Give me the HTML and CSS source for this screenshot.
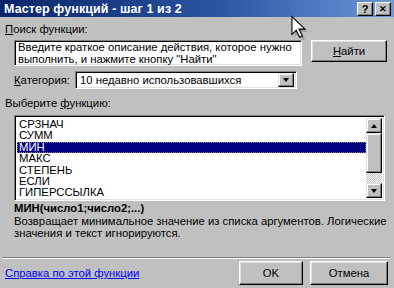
FILE: index.html
```html
<!DOCTYPE html>
<html lang="ru">
<head>
  <meta charset="UTF-8" />
  <title>Мастер функций - шаг 1 из 2</title>
  <link rel="stylesheet" href="styles.css">
</head>
<body>

<div class="dialog">
  <div class="titlebar">
    <span class="titlebar__text">Мастер функций - шаг 1 из 2</span>
    <div class="titlebar__buttons">
      <span class="titlebar__btn">?</span>
      <span class="titlebar__btn titlebar__btn--close">&#10005;</span>
    </div>
  </div>

  <div class="dialog__body">
    <div class="label"><u>П</u>оиск функции:</div>
    <div class="search-row">
      <div class="field search-box">Введите краткое описание действия, которое нужно<br>выполнить, и нажмите кнопку "Найти"</div>
      <span class="btn btn--find"><u>Н</u>айти</span>
    </div>

    <div class="category-row">
      <span class="category-row__label"><u>К</u>атегория:</span>
      <div class="field select">
        <span class="select__value">10 недавно использовавшихся</span>
        <span class="select__arrow"><i class="tri tri--down"></i></span>
      </div>
    </div>

    <div class="label label--list">Выберите <u>ф</u>ункцию:</div>
    <div class="field listbox">
      <ul class="listbox__items">
        <li>СРЗНАЧ</li>
        <li>СУММ</li>
        <li class="selected">МИН</li>
        <li>МАКС</li>
        <li>СТЕПЕНЬ</li>
        <li>ЕСЛИ</li>
        <li>ГИПЕРССЫЛКА</li>
      </ul>
      <div class="scrollbar">
        <span class="scrollbar__btn"><i class="tri tri--up"></i></span>
        <span class="scrollbar__thumb"></span>
        <span class="scrollbar__track"></span>
        <span class="scrollbar__btn"><i class="tri tri--down"></i></span>
      </div>
    </div>

    <div class="signature">МИН(число1;число2;...)</div>
    <div class="description">Возвращает минимальное значение из списка аргументов. Логические<br>значения и текст игнорируются.</div>
  </div>

  <div class="separator"></div>

  <div class="footer">
    <a class="help-link" href="#">Справка по этой функции</a>
    <div class="footer__buttons">
      <span class="btn btn--ok">OK</span>
      <span class="btn btn--cancel">Отмена</span>
    </div>
  </div>
</div>

<svg class="cursor" width="18" height="26" viewBox="0 0 16 24">
  <path d="M2.5 2.5 L2.5 19 L6.5 15 L9.5 21.5 L12 20.5 L9 14 L14.5 14 Z" fill="#7a7a7a" opacity="0.5" transform="translate(1.5,1.5)"/>
  <path d="M1.5 1.5 L1.5 18 L5.5 14 L8.5 20.5 L11 19.5 L8 13 L13.5 13 Z" fill="#fff" stroke="#000" stroke-width="1"/>
</svg>

</body>
</html>
```

FILE: styles.css
```css
* {
  box-sizing: border-box;
}
body {
  margin: 0;
  background: #c0c0c0;
  font-family: 'Liberation Sans', Arial, sans-serif;
  font-size: 11.3px;
  color: #000;
}

.dialog {
  width: 394px;
  height: 288px;
  overflow: hidden;
  position: relative;
}

.titlebar {
  height: 17px;
  display: flex;
  align-items: center;
  justify-content: space-between;
  padding: 0 3px 0 4px;
  background: linear-gradient(to right, #0a246a 0%, #2a54a0 55%, #6a98d8 100%);
  color: #fff;
}
.titlebar__text {
  font-weight: bold;
  font-size: 12.5px;
  letter-spacing: 0.1px;
}
.titlebar__buttons {
  display: flex;
  gap: 2px;
}
.titlebar__btn {
  width: 16px;
  height: 14px;
  display: flex;
  align-items: center;
  justify-content: center;
  background: #c0c0c0;
  color: #000;
  font-weight: bold;
  font-size: 11px;
  border: 1px solid;
  border-color: #fff #000 #000 #fff;
  box-shadow: inset -1px -1px 0 #808080;
}
.titlebar__btn--close {
  font-size: 9px;
}

.dialog__body {
  padding: 6px 0 0 5px;
}

.label {
  line-height: 13px;
}
.label--list {
  margin-top: 8px;
}

.field {
  background: #fff;
  border: 1px solid;
  border-color: #808080 #fff #fff #808080;
  box-shadow: inset 1px 1px 0 #000, inset -1px -1px 0 #dfdfdf;
}

.btn {
  display: flex;
  align-items: center;
  justify-content: center;
  background: #c0c0c0;
  border: 1px solid;
  border-color: #fff #000 #000 #fff;
  box-shadow: inset -1px -1px 0 #808080, inset 1px 1px 0 #dfdfdf;
  color: #000;
}

.search-row {
  display: flex;
  align-items: flex-start;
  gap: 9px;
  margin: 4px 0 0 9px;
}
.search-box {
  width: 288px;
  height: 26px;
  padding: 1px 3px;
  line-height: 11.5px;
}
.btn--find {
  width: 76px;
  height: 22px;
}

.category-row {
  display: flex;
  align-items: center;
  margin: 5px 0 0 9px;
}
.category-row__label {
  width: 61px;
}
.select {
  width: 222px;
  height: 18px;
  display: flex;
  align-items: center;
  justify-content: space-between;
  padding: 2px;
}
.select__value {
  padding-left: 2px;
}
.select__arrow {
  width: 16px;
  height: 14px;
  display: flex;
  align-items: center;
  justify-content: center;
  background: #c0c0c0;
  border: 1px solid;
  border-color: #dfdfdf #000 #000 #dfdfdf;
  box-shadow: inset -1px -1px 0 #808080, inset 1px 1px 0 #fff;
}

.tri {
  display: block;
  width: 0;
  height: 0;
  border-left: 3.5px solid transparent;
  border-right: 3.5px solid transparent;
}
.tri--down {
  border-top: 4px solid #000;
}
.tri--up {
  border-bottom: 4px solid #000;
}

.listbox {
  margin: 5px 0 0 9px;
  width: 371px;
  height: 86px;
  display: flex;
  padding: 2px;
}
.listbox__items {
  flex: 1;
  list-style: none;
  margin: 0;
  padding: 1px 0 0 0;
}
.listbox__items li {
  line-height: 11.4px;
  padding-left: 2px;
}
.listbox__items li.selected {
  background: #000080;
  color: #fff;
  outline: 1px dotted #808080;
  outline-offset: -1px;
}

.scrollbar {
  width: 16px;
  display: flex;
  flex-direction: column;
}
.scrollbar__btn {
  height: 15px;
  display: flex;
  align-items: center;
  justify-content: center;
  background: #c0c0c0;
  border: 1px solid;
  border-color: #dfdfdf #000 #000 #dfdfdf;
  box-shadow: inset -1px -1px 0 #808080, inset 1px 1px 0 #fff;
}
.scrollbar__thumb {
  height: 40px;
  background: #c0c0c0;
  border: 1px solid;
  border-color: #dfdfdf #000 #000 #dfdfdf;
  box-shadow: inset -1px -1px 0 #808080, inset 1px 1px 0 #fff;
}
.scrollbar__track {
  flex: 1;
  background: repeating-conic-gradient(#fff 0 25%, #c0c0c0 0 50%) 0 0 / 2px 2px;
}

.signature {
  margin: 1px 0 0 9px;
  font-weight: bold;
  line-height: 13px;
}
.description {
  margin-left: 9px;
  line-height: 12px;
}

.separator {
  margin: 18px 4px 0 2px;
  border-top: 1px solid #808080;
  border-bottom: 1px solid #fff;
}

.footer {
  display: flex;
  justify-content: space-between;
  align-items: center;
  padding: 0 6px 0 5px;
  margin-top: 2px;
}
.help-link {
  color: #0000ff;
  text-decoration: underline;
}
.footer__buttons {
  display: flex;
  gap: 7px;
}
.btn--ok {
  width: 64px;
  height: 24px;
}
.btn--cancel {
  width: 78px;
  height: 24px;
}

.cursor {
  position: absolute;
  left: 290px;
  top: 15px;
  width: 18px;
  height: 26px;
}
```
